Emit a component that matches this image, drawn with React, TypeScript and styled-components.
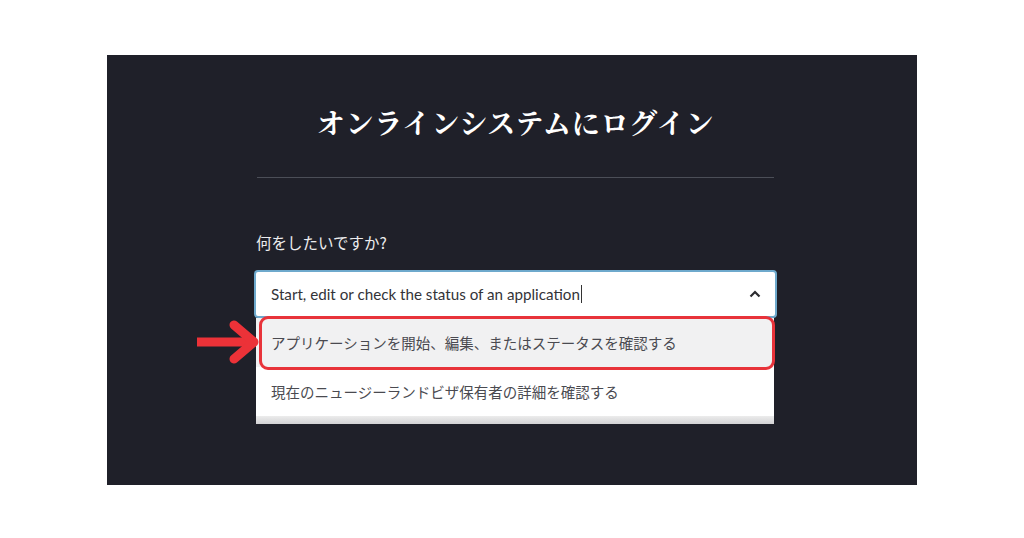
import styled, { createGlobalStyle } from "styled-components";

const GlobalStyle = createGlobalStyle`
  html, body {
    margin: 0;
    padding: 0;
    background: #ffffff;
  }
  body {
    font-family: "Lato", "Noto Sans CJK JP", sans-serif;
  }
`;

const Page = styled.div`
  width: 1024px;
  height: 538px;
  padding-top: 55px;
  box-sizing: border-box;
  display: flex;
  justify-content: center;
`;

const Panel = styled.section`
  width: 810px;
  height: 430px;
  background: #1f2029;
  display: flex;
  flex-direction: column;
  padding: 0 140px 0 147px;
  box-sizing: border-box;
`;

const Title = styled.h1`
  margin: 0;
  padding-top: 49px;
  height: 122px;
  box-sizing: border-box;
  text-align: center;
  color: #ffffff;
  font-family: "Noto Serif CJK JP", "Noto Sans CJK JP", serif;
  font-size: 28px;
  font-weight: 700;
  line-height: 36px;
  letter-spacing: 0.8px;
`;

const Divider = styled.hr`
  margin: 0 3px;
  border: 0;
  height: 1px;
  background: #4b4e57;
`;

const Label = styled.label`
  margin-top: 54px;
  margin-left: 2px;
  color: #ececee;
  font-family: "Noto Sans CJK JP", sans-serif;
  font-size: 15.5px;
  line-height: 20px;
`;

const Field = styled.div`
  position: relative;
  margin-top: 18px;
`;

const Input = styled.div`
  height: 48px;
  box-sizing: border-box;
  background: #ffffff;
  border: 2px solid #6ea9cc;
  border-radius: 4px;
  display: flex;
  align-items: center;
  padding: 0 14px 0 15px;
  color: #333338;
  font-size: 15.2px;
`;

const Value = styled.span`
  flex: 1;
  display: flex;
  align-items: center;
`;

const Caret = styled.span`
  display: inline-block;
  width: 1px;
  height: 18px;
  margin-left: 1px;
  background: #333;
`;

const Menu = styled.ul`
  list-style: none;
  margin: 0 3px 0 2px;
  padding: 0;
  background: #ffffff;
`;

const Option = styled.li<{ $active?: boolean }>`
  height: 49px;
  display: flex;
  align-items: center;
  padding-left: 15px;
  background: ${(p) => (p.$active ? "#f1f1f2" : "#ffffff")};
  color: #4a4a50;
  font-family: "Noto Sans CJK JP", sans-serif;
  font-size: 14.5px;
`;

const MenuFoot = styled.li`
  height: 8px;
  background: linear-gradient(#ececec, #d2d2d4);
`;

const Highlight = styled.div`
  position: absolute;
  left: 5px;
  top: 46px;
  width: 516px;
  height: 54px;
  border: 3px solid #e8333a;
  border-radius: 9px;
  box-sizing: border-box;
  pointer-events: none;
`;

const Arrow = styled.svg`
  position: absolute;
  left: -57px;
  top: 50px;
`;

const ChevronUp = () => (
  <svg width="12" height="8" viewBox="0 0 12 8">
    <path d="M1.5 6.5 L6 2 L10.5 6.5" fill="none" stroke="#2c2c30" strokeWidth="2.2" />
  </svg>
);

export default function App() {
  return (
    <>
      <GlobalStyle />
      <Page>
        <Panel>
          <Title>オンラインシステムにログイン</Title>
          <Divider />
          <Label>何をしたいですか?</Label>
          <Field>
            <Input>
              <Value>
                Start, edit or check the status of an application
                <Caret />
              </Value>
              <ChevronUp />
            </Input>
            <Menu>
              <Option $active>アプリケーションを開始、編集、またはステータスを確認する</Option>
              <Option>現在のニュージーランドビザ保有者の詳細を確認する</Option>
              <MenuFoot />
            </Menu>
            <Highlight />
            <Arrow width="62" height="44" viewBox="0 0 62 44">
              <path d="M2 22 H52" stroke="#ec3238" strokeWidth="9" strokeLinecap="square" />
              <path
                d="M37 5 L57 22 L37 39"
                fill="none"
                stroke="#ec3238"
                strokeWidth="9"
                strokeLinecap="round"
                strokeLinejoin="round"
              />
            </Arrow>
          </Field>
        </Panel>
      </Page>
    </>
  );
}
